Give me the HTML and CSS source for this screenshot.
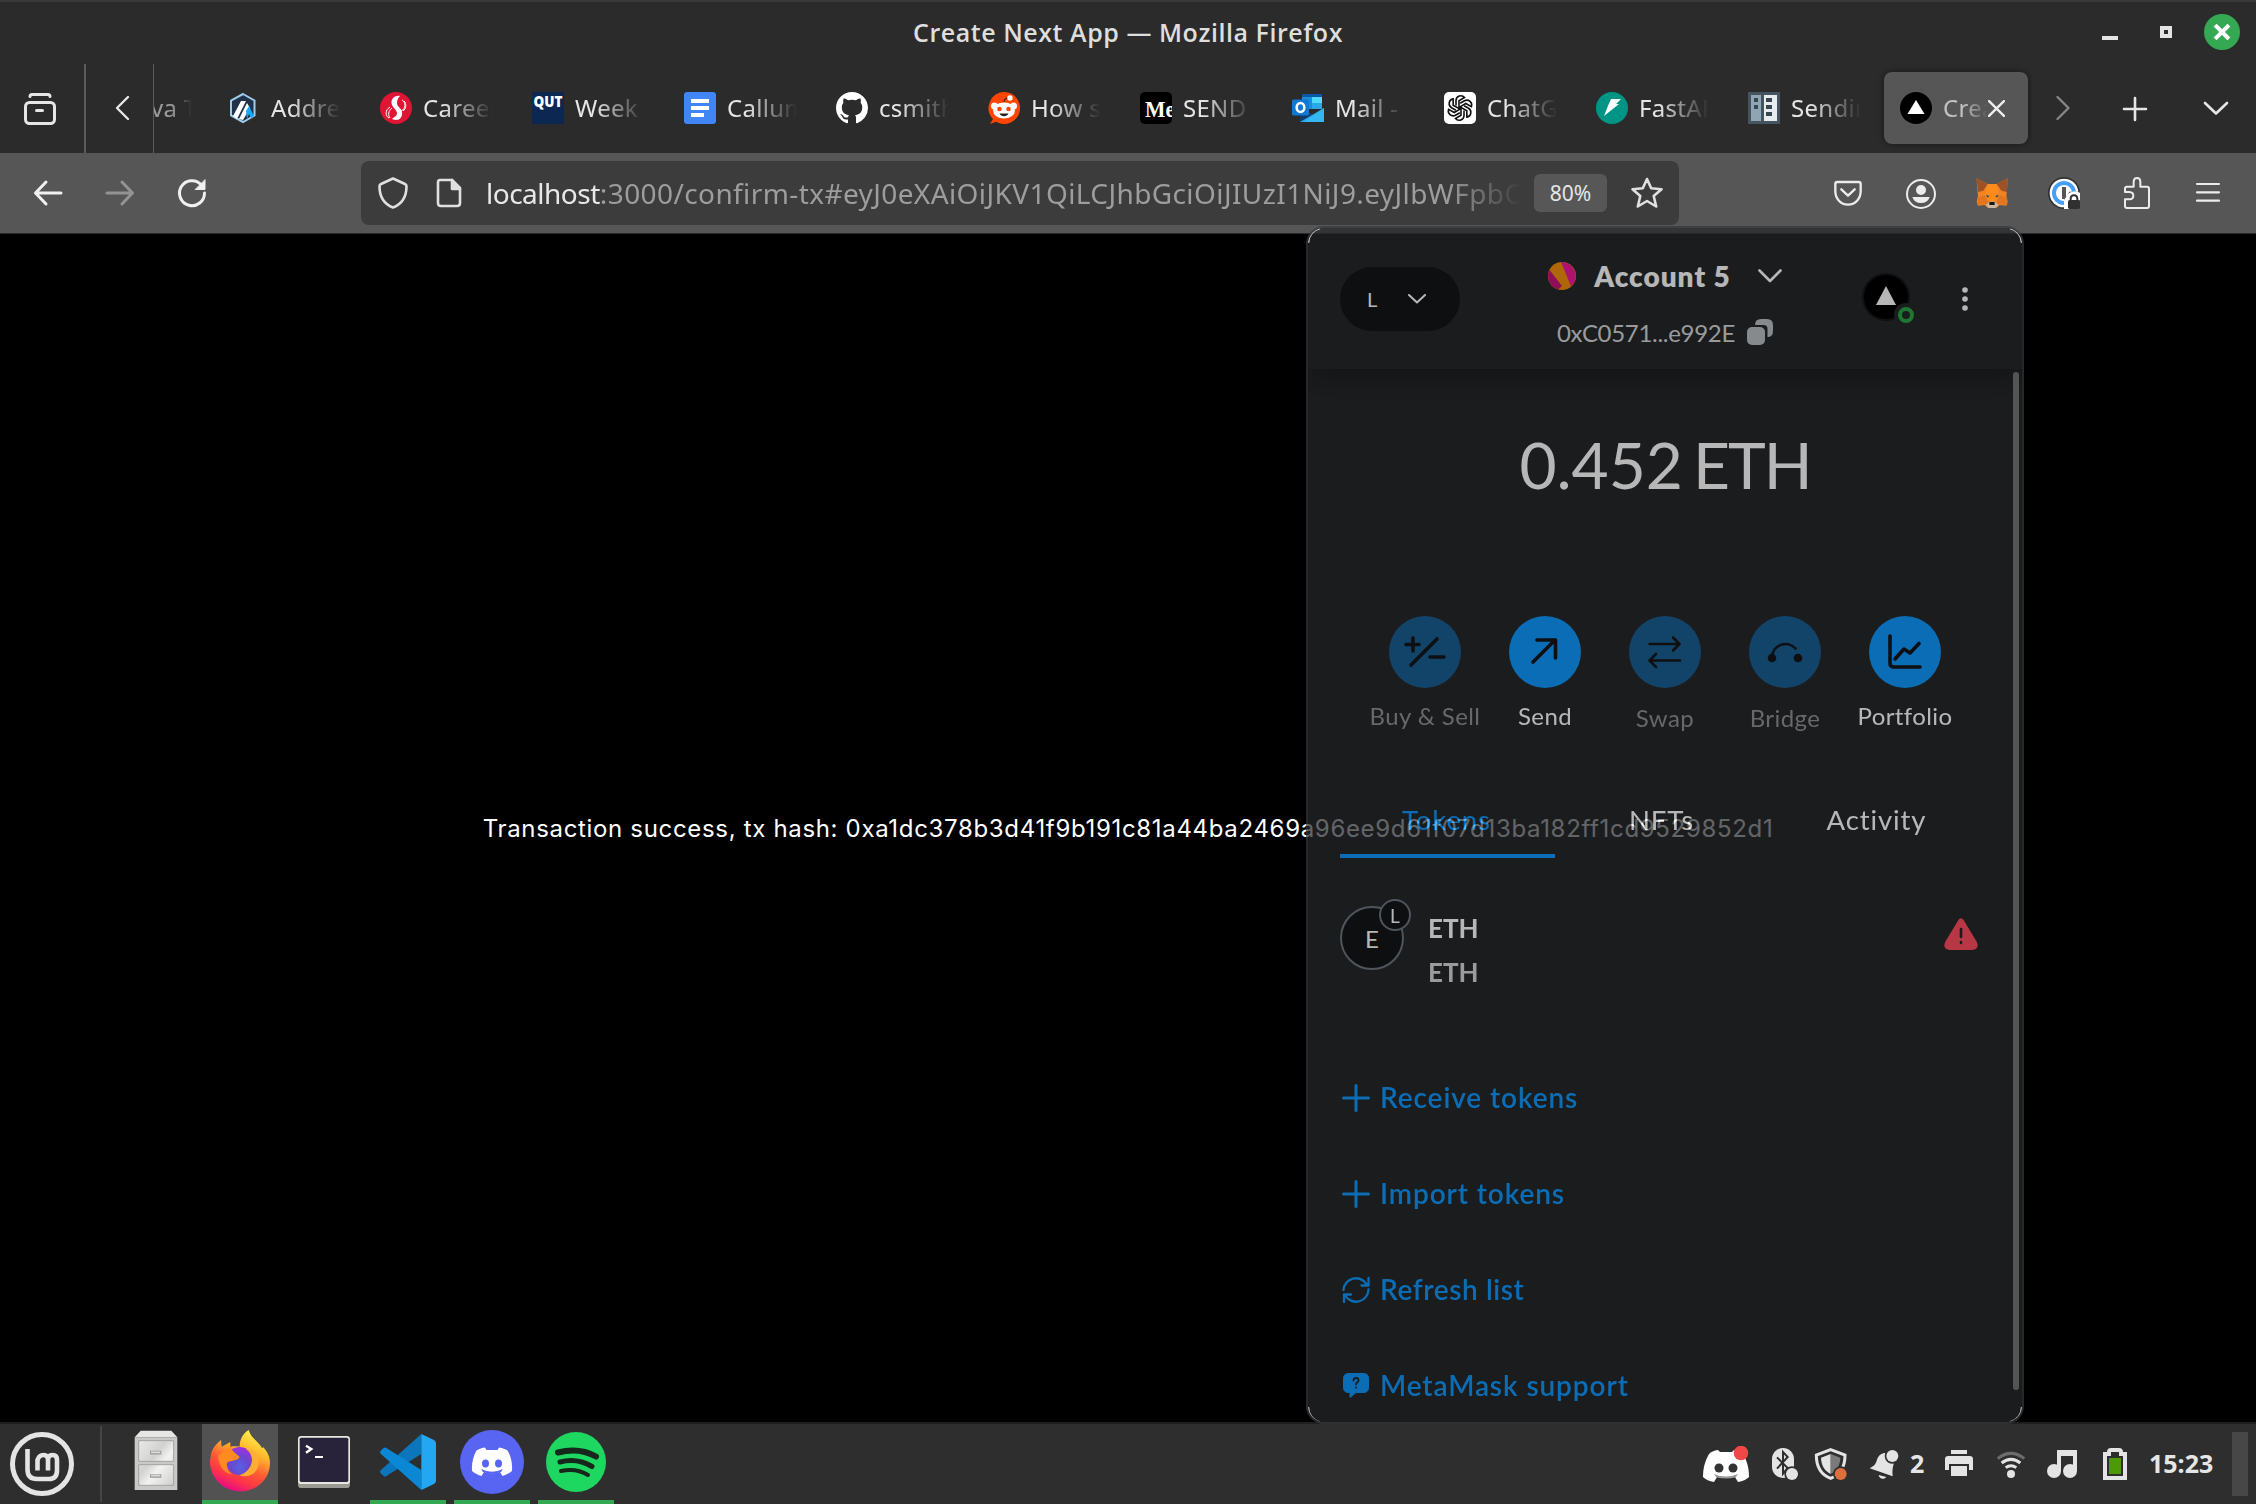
FILE: index.html
```html
<!DOCTYPE html>
<html lang="en">
<head>
<meta charset="utf-8">
<title>Create Next App</title>
<link rel="stylesheet" href="styles.css">
</head>
<body>
<header class="titlebar">
  <div class="window-title">Create Next App — Mozilla Firefox</div>
  <div class="window-controls">
    <svg width="16" height="36" viewBox="0 0 16 36"><path d="M0 22h16v4H0z" fill="#e4e4e4"/></svg>
    <svg width="12" height="36" viewBox="0 0 12 36"><path d="M2 14h8v8H2z" fill="none" stroke="#e4e4e4" stroke-width="4"/></svg>
    <svg width="36" height="36" viewBox="0 0 36 36"><circle cx="18" cy="18" r="18" fill="#35a854"/><path d="M12.500 12.500l11 11M23.500 12.500l-11 11" stroke="#fff" stroke-width="4" stroke-linecap="square"/></svg>
  </div>
</header>

<nav class="tabstrip">
  <div class="view-button"><svg width="32" height="32" viewBox="0 0 32 32" fill="none" stroke="#e6e6e6" stroke-width="3" stroke-linecap="round"><rect x="1.5" y="9.500" width="29" height="21" rx="4"/><path d="M6 3.500C6 2 7 1.500 8 1.500h16c1 0 2 .5 2 2M12.500 17.500h6"/></svg></div>
  <div class="scroll-left"><svg width="16" height="26" viewBox="0 0 16 26" fill="none" stroke="#e6e6e6" stroke-width="2.400" stroke-linecap="round" stroke-linejoin="round"><path d="M14 2L3 13l11 11"/></svg></div>
  <div class="tabs">
    <div class="tab tab-cut"><span class="tab-label">va T</span></div>
    <div class="tab"><svg class="fav" viewBox="0 0 32 32"><path d="M15 2l11.500 6.500v15L15 30 3 23.500v-15z" fill="#213147" stroke="#9dcced" stroke-width="2"/><path d="M5 24l8-15h5L9 27z" fill="#fff"/><path d="M11 27l8-16 3 5-7 12z" fill="#fff"/><path d="M18 19l3-5 5 10-3 2-2-4-2 5z" fill="#12aaff"/></svg><span class="tab-label">Address</span></div>
    <div class="tab"><svg class="fav" viewBox="0 0 32 32"><circle cx="16" cy="16" r="16" fill="#e01533"/><path d="M20 4c-6-1-10 4-8 9 1 3 5 5 5 8s-3 4-5 6c6 3 11-1 10-7-.500-4-5-5-5-9 0-3 1-5 3-7z" fill="#fff"/><path d="M22 8c4 2 4 9-1 11M24 9c3 3 2 8-1 10M10 15c-5 3-5 9-1 11M12 16c-4 3-4 7-2 10" stroke="#fff" fill="none"/></svg><span class="tab-label">Careers</span></div>
    <div class="tab"><svg class="fav" viewBox="0 0 32 32"><path d="M0 0h32v32H0z" fill="#0c2852"/><text x="1.500" y="15" class="fav-qut" textLength="29" lengthAdjust="spacingAndGlyphs">QUT</text></svg><span class="tab-label">Week 1</span></div>
    <div class="tab"><svg class="fav" viewBox="0 0 32 32"><rect width="32" height="32" rx="3" fill="#4285f4"/><path d="M7 9h18M7 16h18M7 23h13" stroke="#fff" stroke-width="4"/></svg><span class="tab-label">Callum</span></div>
    <div class="tab"><svg class="fav" viewBox="0 0 16 16"><path fill="#fff" d="M8 0C3.580 0 0 3.580 0 8c0 3.540 2.290 6.530 5.470 7.590.4.070.55-.17.55-.38 0-.19-.010-.82-.010-1.490-2.010.37-2.530-.49-2.690-.94-.090-.23-.48-.94-.82-1.130-.28-.15-.68-.52-.010-.53.63-.010 1.080.58 1.230.82.72 1.210 1.870.87 2.330.66.070-.52.28-.87.510-1.070-1.780-.2-3.640-.89-3.640-3.950 0-.87.310-1.590.82-2.150-.080-.2-.36-1.020.080-2.120 0 0 .67-.21 2.200.82.64-.18 1.320-.27 2-.27s1.360.090 2 .27c1.530-1.040 2.200-.82 2.200-.82.44 1.100.16 1.920.080 2.120.510.56.82 1.270.82 2.150 0 3.070-1.870 3.750-3.650 3.950.29.25.54.73.54 1.480 0 1.070-.010 1.930-.010 2.200 0 .21.15.46.55.38A8.010 8.010 0 0016 8c0-4.420-3.580-8-8-8z"/></svg><span class="tab-label">csmith</span></div>
    <div class="tab"><svg class="fav" viewBox="0 0 32 32"><path d="M16 0a16 16 0 11-8 29.800L2 32l3-5A16 16 0 0116 0z" fill="#ff4500"/><circle cx="6.500" cy="14" r="3.500" fill="#fff"/><circle cx="25.500" cy="14" r="3.500" fill="#fff"/><ellipse cx="16" cy="18.500" rx="11" ry="8" fill="#fff"/><path d="M16 10c0-3 2-4 5-4" stroke="#222" stroke-width="1.200" fill="none"/><circle cx="22" cy="6" r="2.700" fill="#fff"/><circle cx="11.500" cy="17" r="2.300" fill="#ff4500"/><circle cx="20.500" cy="17" r="2.300" fill="#ff4500"/><path d="M11.500 21.500h9c-1.500 3.500-7.500 3.500-9 0z" fill="#222"/></svg><span class="tab-label">How s</span></div>
    <div class="tab"><svg class="fav" viewBox="0 0 32 32"><rect width="32" height="32" rx="5"/><text x="5" y="25" class="fav-serif" textLength="30" lengthAdjust="spacingAndGlyphs">Me</text></svg><span class="tab-label">SEND</span></div>
    <div class="tab"><svg class="fav" viewBox="0 0 32 32"><path d="M10 2h20v15H10z" fill="#1490df"/><path d="M10 2h20v3H10z" fill="#0a58a8"/><path d="M20 5h10v6H20z" fill="#50d9ff"/><path d="M20 11h10v6H20z" fill="#28a8ea"/><path d="M8 16l12 7 12-7v14H8z" fill="#28a8ea"/><path d="M8 16l12 7-12 7z" fill="#123b6d"/><path d="M12 30l20-14v14z" fill="#35b8f1"/><rect y="7.500" width="17" height="16" rx="1.500" fill="#0f78d4"/><ellipse cx="8.500" cy="15.500" rx="3.800" ry="4.500" fill="none" stroke="#fff" stroke-width="2.600"/></svg><span class="tab-label">Mail -</span></div>
    <div class="tab"><svg class="fav" viewBox="0 0 32 32"><rect width="32" height="32" rx="5" fill="#fff"/><g fill="none" stroke="#111" stroke-width="1.600" transform="translate(16 16)"><path d="M-4-2.500v-5a4.800 4.800 0 018.500-3L-1-7.300V1"/><path d="M-4-2.500v-5a4.800 4.800 0 018.500-3L-1-7.300V1" transform="rotate(60)"/><path d="M-4-2.500v-5a4.800 4.800 0 018.500-3L-1-7.300V1" transform="rotate(120)"/><path d="M-4-2.500v-5a4.800 4.800 0 018.500-3L-1-7.300V1" transform="rotate(180)"/><path d="M-4-2.500v-5a4.800 4.800 0 018.500-3L-1-7.300V1" transform="rotate(240)"/><path d="M-4-2.500v-5a4.800 4.800 0 018.500-3L-1-7.300V1" transform="rotate(300)"/></g></svg><span class="tab-label">ChatGPT</span></div>
    <div class="tab"><svg class="fav" viewBox="0 0 32 32"><circle cx="16" cy="16" r="16" fill="#009485"/><path d="M15 7h10l-5 5h3L8 24l3.500-9z" fill="#fff"/></svg><span class="tab-label">FastAPI</span></div>
    <div class="tab"><svg class="fav" viewBox="0 0 32 32"><path d="M0 0h32v32H0z" fill="#455560"/><path d="M3 3h10v26H3z" fill="#90a4b4"/><path d="M16 3h13v26H16z" fill="#e6ecef"/><path d="M6 6h4v4H6zM6 13h4v4H6zM18 6h6v4h-6zM18 13h6v4h-6zM18 20h6v4h-6z" fill="#37474f"/></svg><span class="tab-label">Sending</span></div>
    <div class="tab tab-active"><svg class="fav" viewBox="0 0 32 32"><circle cx="16" cy="16" r="16"/><path d="M16 8l8.500 14h-17z" fill="#fff"/></svg><span class="tab-label">Create</span><svg class="tab-close" viewBox="0 0 16 16"><path d="M1 1l14 14M15 1L1 15" stroke="#eee" stroke-width="2.200" stroke-linecap="round"/></svg></div>
  </div>
  <div class="strip-actions">
    <svg width="32" height="32" viewBox="0 0 32 32" fill="none" stroke="#858585" stroke-width="2.400" stroke-linecap="round" stroke-linejoin="round"><path d="M10.500 5l11 11-11 11"/></svg>
    <svg width="32" height="32" viewBox="0 0 32 32" fill="none" stroke="#e6e6e6" stroke-width="2.600" stroke-linecap="round"><path d="M16 6v22M5 17h22"/></svg>
    <svg class="all-tabs" width="32" height="32" viewBox="0 0 32 32" fill="none" stroke="#e6e6e6" stroke-width="2.600" stroke-linecap="round" stroke-linejoin="round"><path d="M5 11l11 10.500L27 11"/></svg>
  </div>
</nav>

<div class="toolbar">
  <div class="nav-buttons">
    <svg width="32" height="32" viewBox="0 0 32 32" fill="none" stroke="#f0f0f0" stroke-width="3" stroke-linecap="round" stroke-linejoin="round"><path d="M14 5L3.500 16 14 27M4 16h25"/></svg>
    <svg width="32" height="32" viewBox="0 0 32 32" fill="none" stroke="#939393" stroke-width="3" stroke-linecap="round" stroke-linejoin="round"><path d="M18 5l10.500 11L18 27M28 16H3"/></svg>
    <svg width="32" height="32" viewBox="0 0 32 32" fill="none" stroke="#f0f0f0" stroke-width="3" stroke-linecap="round"><path d="M28.500 16A12.500 12.500 0 1125 7.500"/><path d="M29 3v9.500h-9.500z" fill="#f0f0f0" stroke-width="1" stroke-linejoin="round"/></svg>
  </div>
  <div class="urlbar">
    <svg width="32" height="32" viewBox="0 0 32 32" fill="none" stroke="#e0e0e0" stroke-width="2.600" stroke-linejoin="round"><path d="M16 1.500l12 5.500q1.500.7 1.500 2.500C29.500 19 25 27 16 30.500 7 27 2.500 19 2.500 9.500 2.500 7.700 3 7.300 4 7z"/></svg>
    <svg class="doc" width="26" height="30" viewBox="0 0 26 30" fill="none" stroke="#e0e0e0" stroke-width="2.600" stroke-linejoin="round"><path d="M4 2h12l8 8v15q0 3-3 3H5q-3 0-3-3V4.500Q2 2 4 2z"/><path d="M16 2v9h8z" fill="#e0e0e0"/></svg>
    <div class="url"><span class="host">localhost</span>:3000/confirm-tx#eyJ0eXAiOiJKV1QiLCJhbGciOiJIUzI1NiJ9.eyJlbWFpbC</div>
    <span class="zoom-level">80%</span>
    <svg width="32" height="32" viewBox="0 0 32 32" fill="none" stroke="#e0e0e0" stroke-width="2.600" stroke-linejoin="round"><path d="M16 2l4.200 9.300 10.300 1-7.800 6.700 2.500 10.500L16 24l-9.200 5.500L9.300 19 1.500 12.300l10.300-1z"/></svg>
  </div>
  <div class="extensions">
    <svg width="32" height="32" viewBox="36 51 96 96" fill="none" stroke="#ececec" stroke-width="7" stroke-linecap="round" stroke-linejoin="round"><path d="M52 66h64q6 0 6 6v22c0 22-16 40-38 40S46 116 46 94V72q0-6 6-6zM64 88l20 19 20-19"/></svg>
    <svg width="32" height="32" viewBox="252 51 96 96"><circle cx="303" cy="102" r="42" fill="none" stroke="#ececec" stroke-width="6"/><circle cx="303" cy="90" r="15" fill="#ececec"/><path d="M277 111h52q-6 18-26 18t-26-18z" fill="#ececec"/></svg>
    <svg width="32" height="32" viewBox="468 51 96 96"><path d="M470 55l33 17h27l33-17-2 34-2 18 4 18-4 12-20-2-10 9h-25l-10-9-20 2-4-12 4-18-2-18z" fill="#f28324"/><path d="M470 55l33 17-13 20-16 4zM563 55l-33 17 14 20 17 4z" fill="#9b5227"/><path d="M503 72l-9 38 22 20 22-20-8-38z" fill="#fa8b1c"/><path d="M474 112l22-6 10 26-34 2zM560 112l-22-6-10 26 34 2z" fill="#e2751d"/><path d="M498 104l10 4-5 5zM536 104l-10 4 5 5z" fill="#234466"/><path d="M498 134l10-9h17l10 9-9 10h-19z" fill="#c9b8a8"/><path d="M508 126h16v9h-16z" fill="#181818"/></svg>
    <svg width="32" height="32" viewBox="684 51 96 96"><circle cx="732" cy="99" r="48" fill="#303030"/><circle cx="732" cy="99" r="43" fill="#fff"/><circle cx="732" cy="99" r="30" fill="none" stroke="#469ffb" stroke-width="12"/><path d="M726 81h12v36h-12z" fill="#555"/><path d="M732 147v-27l16-25h32v52z" fill="#565656"/><path d="M732 147v-26l12-20q18-14 36-2v20l-30 28z" fill="#fff"/><path d="M752 124v-7q0-11 10-11t10 11v7" fill="none" stroke="#303030" stroke-width="6"/><rect x="744" y="120" width="36" height="27" rx="5" fill="#303030"/></svg>
    <svg width="32" height="32" viewBox="900 51 96 96" fill="none" stroke="#ececec" stroke-width="6" stroke-linejoin="round"><path d="M921 80h20V64q1-10 10-10t10 10v16h20q6 0 6 6v52q0 6-6 6h-60q-6 0-6-6v-20h13q12-1 12-11t-12-11h-13V86q0-6 6-6z"/></svg>
    <svg width="32" height="32" viewBox="1116 51 96 96" stroke="#ececec" stroke-width="6.500" stroke-linecap="round"><path d="M1131 72h66M1131 97h66M1131 122h66"/></svg>
  </div>
</div>

<main class="page"><p class="message">Transaction success, tx hash: 0xa1dc378b3d41f9b191c81a44ba2469a96ee9d61f07d13ba182ff1cd9529852d1</p></main>

<section class="popup">
  <div class="popup-header">
    <div class="network"><span>L</span><svg width="18" height="10" viewBox="0 0 18 10" fill="none" stroke="#fff" stroke-width="2" stroke-linecap="round" stroke-linejoin="round"><path d="M1 1l8 7.500L17 1"/></svg></div>
    <div class="account">
      <div class="account-name"><svg width="28" height="28" viewBox="0 0 28 28"><circle cx="14" cy="14" r="14" fill="#f5900b"/><path d="M13 0a14 14 0 0110 24.500z" fill="#f01b9a"/><path d="M1.500 8L14 24l-4 3.500A14 14 0 011.500 8z" fill="#c8147d"/></svg><span class="name">Account 5</span><svg width="24" height="14" viewBox="0 0 24 14" fill="none" stroke="#fff" stroke-width="2.600" stroke-linecap="round" stroke-linejoin="round"><path d="M1.500 1.500L12 12 22.500 1.500"/></svg></div>
      <div class="account-address"><span class="address">0xC0571...e992E</span><svg width="26" height="26" viewBox="0 0 26 26" fill="#bbc0c5"><rect y="8" width="18" height="18" rx="5"/><path d="M8 6q0-6 6-6h6q6 0 6 6v6q0 6-5.500 6v-8q0-4-4-4z"/></svg></div>
    </div>
    <div class="header-actions">
      <svg width="56" height="56" viewBox="0 0 56 56"><circle cx="26" cy="26" r="23" stroke="#15171a" stroke-width="2"/><path d="M26 15l10 19H16z" fill="#fff"/><circle cx="46" cy="44" r="12" fill="#26282a"/><circle cx="46" cy="44" r="6" fill="none" stroke="#28a745" stroke-width="4"/></svg>
      <svg width="50" height="50" viewBox="0 0 50 50" fill="#fff"><circle cx="25" cy="16" r="2.800"/><circle cx="25" cy="25" r="2.800"/><circle cx="25" cy="34" r="2.800"/></svg>
    </div>
  </div>

  <div class="popup-body">
    <div class="balance"><span>0.452</span><span class="unit">ETH</span></div>
    <div class="actions">
      <div class="action action-off"><svg viewBox="0 0 72 72"><path d="M24 22v13M17 28.500h13M22 49l26-26M41 41h14" /></svg><span>Buy &amp; Sell</span></div>
      <div class="action"><svg viewBox="0 0 72 72"><path d="M24 46l22-22M28 24h18.500v18"/></svg><span>Send</span></div>
      <div class="action action-off action-low"><svg class="thin" viewBox="0 0 72 72"><path d="M20.500 28h30M44 21.500l6.500 6.500-6.500 6.500M51 44.500H20.500M27 38l-6.500 6.500L27 51"/></svg><span>Swap</span></div>
      <div class="action action-off action-low"><svg class="thin" viewBox="0 0 72 72"><path d="M23 41a13.500 13.500 0 0123.500-8.500"/><circle cx="23" cy="42" r="3" class="solid"/><circle cx="49" cy="42" r="3" class="solid"/></svg><span>Bridge</span></div>
      <div class="action"><svg viewBox="0 0 72 72"><path d="M21 20v27q0 4 4 4h26M26 43l9-10 6 4 9-9.500"/></svg><span>Portfolio</span></div>
    </div>
    <div class="sections"><div class="section section-on">Tokens</div><div class="section">NFTs</div><div class="section">Activity</div></div>
    <div class="token">
      <div class="token-icon">E<span class="token-badge">L</span></div>
      <div class="token-names"><span>ETH</span><span class="muted">ETH</span></div>
      <svg class="warning" width="34" height="32" viewBox="0 0 34 32"><path d="M17 3.500L30 25q2 4-2 4H6q-4 0-2-4z" fill="#ff4d5f" stroke="#ff4d5f" stroke-width="6" stroke-linejoin="round"/><path d="M17 11v8M17 24v1" stroke="#24272a" stroke-width="2.600" stroke-linecap="round"/></svg>
    </div>
    <div class="links">
      <div class="link"><svg viewBox="0 0 28 28"><path d="M14 1.500v25M1.500 14h25" stroke-width="3"/></svg><span>Receive tokens</span></div>
      <div class="link"><svg viewBox="0 0 28 28"><path d="M14 1.500v25M1.500 14h25" stroke-width="3"/></svg><span>Import tokens</span></div>
      <div class="link"><svg viewBox="0 0 28 28"><path d="M1.500 14A12.500 12.500 0 0124.500 8M26.500 13.500A12.500 12.500 0 013.500 20M26.500 2v7.500h-7M2 26v-7.500h7" stroke-width="2.300"/></svg><span class="tight">Refresh list</span></div>
      <div class="link"><svg viewBox="0 0 28 28"><path d="M6.500 1.500h15q5 0 5 5v9q0 5-5 5H14l-6 5v-5H6.500q-5 0-5-5v-9q0-5 5-5z" fill="currentColor" stroke-width="1"/><path d="M11.500 8.500q.3-2.500 2.600-2.500t2.500 2.300c0 2-2.600 2-2.600 4.200M14 15.500v.3" stroke="#24272a" stroke-width="1.800"/></svg><span>MetaMask support</span></div>
    </div>
  </div>
  <div class="scrollbar"></div>
  <svg class="corners" viewBox="0 0 718 1198" fill="none" stroke="#fff" stroke-width="1.500"><path d="M2.500 17A15 15 0 0114 2.500M704 2.500A15 15 0 01715.500 17M2.500 1181A15 15 0 0014 1196M704 1196a15 15 0 0011.500-15"/></svg>
</section>

<footer class="taskbar">
  <svg class="start" viewBox="0 0 64 64" fill="none" stroke="#e4e4e4"><circle cx="32" cy="32" r="29.500" stroke-width="5"/><path d="M17.500 17v20.500q0 9.500 9.500 9.500h12q8 0 8-8.500V28q0-5-4.500-5T38 28v10.500M38 38.500V28q0-5-4.500-5T27.500 28v10.500" stroke-width="4.600"/></svg>
  <div class="separator"></div>
  <div class="launchers">
    <div class="launcher"><svg viewBox="354 6 228 228"><defs><linearGradient id="steel" x2="1" y2="1"><stop offset="0" stop-color="#e9e9e7"/><stop offset=".4" stop-color="#d2d2d0"/><stop offset=".6" stop-color="#f2f2f1"/><stop offset="1" stop-color="#cfcfcd"/></linearGradient></defs><path d="M404 46l18-20h92l18 20z" fill="#e6e6e4"/><path d="M404 46h128v158H404z" fill="#c9c9c7"/><path d="M416 56h105v62H416zM416 128h105v62H416z" fill="url(#steel)" stroke="#a3a3a1" stroke-width="3"/><path d="M450 92h34M450 162h34" stroke="#999" stroke-width="11"/><path d="M453 91h28M453 161h28" stroke="#dcdcdc" stroke-width="5"/></svg></div>
    <div class="launcher launcher-open launcher-focus"><svg viewBox="606 6 228 228"><defs><linearGradient id="fire" x1=".8" y1="0" x2=".35" y2="1"><stop offset=".05" stop-color="#fff24a"/><stop offset=".35" stop-color="#ffb42c"/><stop offset=".6" stop-color="#ff5b33"/><stop offset=".8" stop-color="#ff3647"/><stop offset="1" stop-color="#e3098a"/></linearGradient><radialGradient id="globe" cx=".5" cy=".7" r=".7"><stop offset="0" stop-color="#5a5fe6"/><stop offset=".5" stop-color="#6b46cf"/><stop offset="1" stop-color="#a031e0"/></radialGradient></defs><path d="M632 104c2-20 12-34 31-50l2 20 26-14v14c8-1 20-2 28 0 0-20 8-38 27-50 8 26 28 33 40 54l4-2c12 14 20 28 20 46 0 50-40 86-90 86s-90-40-90-90z" fill="url(#fire)"/><circle cx="719" cy="117" r="42" fill="url(#globe)"/><path d="M655 100l36-26c5 12 14 20 28 30-3 14-30 10-38 18-2 12 4 28 16 36-26-4-42-26-42-58z" fill="#ff8a1f"/><path d="M736 80c14 8 21 22 20 38-4 22-18 36-38 42 40 12 68-20 56-58-6-14-20-22-38-22z" fill="#ffae32"/></svg></div>
    <div class="launcher"><svg viewBox="858 6 228 228"><rect x="894" y="60" width="156" height="138" rx="10" fill="#9a9a92"/><rect x="894" y="42" width="156" height="144" rx="10" fill="#e8e8e2"/><rect x="899" y="47" width="146" height="133" rx="5" fill="#28233a"/><path d="M918 71l16 10-16 11" fill="none" stroke="#fff" stroke-width="7"/><path d="M945 105h24" stroke="#fff" stroke-width="6"/></svg></div>
    <div class="launcher launcher-open"><svg viewBox="1110 6 228 228"><path d="M1264 36v60l-105 66q-4 3-8 0l-9-8q-4-4 0-9z" fill="#0b76bb"/><path d="M1264 204v-60l-105-66q-4-3-8 0l-9 8q-4 4 0 9z" fill="#0a88d6"/><path d="M1264 36l38 18q6 4 6 10v112q0 6-6 10l-38 18z" fill="#24a7f2"/></svg></div>
    <div class="launcher launcher-open"><svg viewBox="0 0 76 76"><circle cx="38" cy="38" r="32" fill="#5865f2"/><path d="M31 23.500c-4 .5-7 2-8.500 3-3.500 6-5 13-4.500 20.500 3 2.500 6 4 9.500 5l2.500-4c5 1.500 11 1.500 16 0l2.500 4c3.500-1 6.500-2.500 9.500-5 .5-8-1-15-4.500-20.500-2-1.300-5-2.500-8.500-3l-1.500 2.500h-11z" fill="#fff"/><path d="M27 45q11 5.500 22 0l-2 3q-9 3-18 0z" fill="#5865f2"/><ellipse cx="31.500" cy="39.500" rx="3.500" ry="4" fill="#5865f2"/><ellipse cx="44.500" cy="39.500" rx="3.500" ry="4" fill="#5865f2"/></svg></div>
    <div class="launcher launcher-open"><svg viewBox="0 0 76 76"><circle cx="38" cy="38" r="30" fill="#1ed760"/><path d="M20 28.500q21-5.500 38 4" stroke-width="6"/><path d="M22 38q17-4.500 32 4.500" stroke-width="5"/><path d="M23 47q15-3.500 27 4" stroke-width="4"/></svg></div>
  </div>
  <div class="tray">
    <svg width="46" height="36" viewBox="0 0 46 36"><path d="M15 4c-4 .5-7 2-9 4C2 15 0 22 0 31q4 4 11 5l3-5q9 2 18 0l3 5q7-1 11-5C46 22 44 15 40 8c-2-2-5-3.500-9-4l-2 2H17z" fill="#fff"/><path d="M11 28q12 5 24 0l-2 3q-10 3-20 0z" fill="#9a9a9a"/><circle cx="16" cy="22" r="4.500" fill="#333"/><circle cx="30" cy="22" r="4.500" fill="#333"/><circle cx="38" cy="7" r="7.300" fill="#f04747"/></svg>
    <svg class="t-bt" width="26" height="32" viewBox="228 54 78 96"><rect x="228" y="54" width="66" height="90" rx="33" fill="#e4e4e4"/><path d="M243 82l32 32-14 17V66l14 15-32 35" fill="none" stroke="#2e2e2e" stroke-width="6"/><circle cx="288" cy="132" r="23" fill="#2e2e2e"/><circle cx="288" cy="132" r="18" fill="#e4e4e4"/></svg>
    <svg class="t-sh" width="33" height="32" viewBox="352 54 99 96"><path d="M402 59l43 16c0 38-16 60-43 70-27-10-43-32-43-70z" fill="none" stroke="#e4e4e4" stroke-width="9"/><path d="M402 72v60c-18-10-28-24-29-49z" fill="#e4e4e4"/><path d="M402 72v60c18-10 28-24 29-49z" fill="#7a7a7a"/><circle cx="432" cy="132" r="23" fill="#2e2e2e"/><circle cx="432" cy="132" r="18" fill="#dd6e3d"/></svg>
    <svg class="t-bell" width="30" height="32" viewBox="518 54 90 96"><path d="M520 115c16-9 18-14 22-26 4-14 16-22 30-20 18 5 24 16 20 32-3 12-5 22-3 38z" fill="#e4e4e4"/><path d="M547 135q3 13 15 11 6-1 8-5z" fill="#e4e4e4"/><circle cx="588" cy="78" r="23" fill="#2e2e2e"/><circle cx="588" cy="78" r="18" fill="#e4e4e4"/></svg>
    <span class="t-count">2</span>
    <svg class="t-print" width="28" height="32" viewBox="747 54 84 96" fill="#e4e4e4"><path d="M765 60h48v12h-48zM757 78h64q10 0 10 10v32h-12v-18h-60v18h-12V88q0-10 10-10zM765 108h48v30h-48z"/></svg>
    <svg class="t-wifi" width="28" height="32" viewBox="903 54 84 96" fill="none" stroke="#e4e4e4" stroke-width="9"><path d="M905 86q40-32 80 0" stroke="#6c6c6c"/><path d="M917 99q28-22 56 0M929 113q16-12 32 0"/><circle cx="945" cy="132" r="12" fill="#e4e4e4" stroke="none"/></svg>
    <svg class="t-music" width="30" height="32" viewBox="1053 54 90 96"><path d="M1083 60h60v64h-12V78h-36v46h-12z" fill="#e4e4e4"/><ellipse cx="1074" cy="123" rx="21" ry="21" fill="#e4e4e4"/><ellipse cx="1122" cy="123" rx="21" ry="21" fill="#e4e4e4"/></svg>
    <svg class="t-batt" width="24" height="32" viewBox="1221 54 72 96"><path d="M1221 66h12q0-12 12-12h24q12 0 12 12h12v84h-72z" fill="#e4e4e4"/><path d="M1233 78h12V66h24v12h12v60h-48z" fill="#2e2e2e"/><path d="M1239 84h36v48h-36z" fill="#4e9a06"/></svg>
    <span class="clock">15:23</span>
    <div class="show-desktop"></div>
  </div>
</footer>
</body>
</html>
```
FILE: styles.css
```css
* { box-sizing: border-box; }
body {
  margin: 0;
  width: 2256px;
  height: 1504px;
  overflow: hidden;
  display: flex;
  flex-direction: column;
  position: relative;
  background: #000;
  color: #e6e6e6;
  font-family: "Noto Sans", sans-serif;
}
svg { display: block; flex: none; }

/* Title bar */
.titlebar {
  flex: 0 0 64px;
  display: grid;
  grid-template-columns: 1fr auto 1fr;
  background: #2b2b2b;
  border-top: 2px solid #393939;
}
.window-title {
  grid-column: 2;
  font-family: "Open Sans", sans-serif;
  font-size: 25px;
  font-weight: 600;
  line-height: 60px;
  letter-spacing: .55px;
  color: #dedede;
  white-space: nowrap;
}
.window-controls {
  grid-column: 3;
  display: flex;
  justify-content: flex-end;
  padding: 12px 16px 0 0;
}
.window-controls svg:nth-child(2) { margin: 0 32px 0 42px; }

/* Tab strip */
.tabstrip {
  flex: 0 0 89px;
  display: flex;
  background: #2b2b2b;
}
.view-button {
  width: 86px;
  border-right: 2px solid #5b5b5b;
  padding: 29px 0 0 24px;
}
.scroll-left {
  width: 68px;
  border-right: 1px solid #5b5b5b;
  padding: 31px 0 0 28px;
}
.tabs {
  width: 1878px;
  display: flex;
  overflow: hidden;
}
.tab {
  flex: 0 0 144px;
  min-width: 0;
  height: 72px;
  margin: 8px 4px 0;
  padding: 0 15px 0 16px;
  display: flex;
  align-items: center;
  border-radius: 8px;
}
.tab-cut { flex-basis: 46px; padding: 0 12px 0 0; }
.tab-cut .tab-label { margin-left: -7px; opacity: .6; }
.fav { width: 32px; height: 32px; }
.fav-qut { font: 800 16px "Open Sans", sans-serif; fill: #fff; }
.fav-serif { font: 700 24px "Liberation Serif", serif; fill: #fff; }
.tab-label {
  flex: 1;
  min-width: 0;
  margin-left: 11px;
  overflow: hidden;
  white-space: nowrap;
  font-size: 24px;
  line-height: 34px;
  letter-spacing: .3px;
  -webkit-mask-image: linear-gradient(to right, #000 20px, transparent 100%);
  mask-image: linear-gradient(to right, #000 20px, transparent 100%);
}
.tab-active {
  background: #565656;
  box-shadow: 0 0 6px rgba(0, 0, 0, .5);
  padding-right: 23px;
}
.tab-active .tab-label { opacity: .75; }
.tab-close { width: 17px; height: 17px; }
.strip-actions {
  display: flex;
  gap: 40px;
  padding: 28px 0 0 15px;
}
.all-tabs { margin-left: 9px; }

/* Toolbar */
.toolbar {
  flex: 0 0 81px;
  display: flex;
  align-items: center;
  justify-content: space-between;
  padding: 0 32px;
  background: #565656;
  border-bottom: 1px solid #2b2b2b;
}
.nav-buttons { display: flex; gap: 40px; width: 329px; }
.urlbar {
  flex: 0 0 1318px;
  height: 64px;
  display: flex;
  align-items: center;
  padding: 0 16px;
  background: #3c3c3c;
  border-radius: 8px;
}
.doc { margin-left: 27px; }
.url {
  flex: 0 0 1036px;
  margin-left: 24px;
  overflow: hidden;
  white-space: nowrap;
  font-size: 28px;
  line-height: 40px;
  letter-spacing: .4px;
  color: #9d9d9d;
  -webkit-mask-image: linear-gradient(to right, #000 960px, transparent 100%);
  mask-image: linear-gradient(to right, #000 960px, transparent 100%);
}
.host { color: #e8e8e8; letter-spacing: -.5px; }
.zoom-level {
  width: 73px;
  height: 38px;
  margin: 0 24px 0 12px;
  border-radius: 6px;
  background: #575757;
  font-size: 21px;
  line-height: 38px;
  text-align: center;
}
.extensions { display: flex; gap: 40px; margin-left: auto; }

/* Page */
.page {
  flex: 1;
  display: flex;
  align-items: center;
  justify-content: center;
}
.message {
  margin: 2px 0 0;
  font-family: Inter, sans-serif;
  font-size: 24px;
  line-height: 36px;
  letter-spacing: .67px;
  color: #fff;
  white-space: nowrap;
}

/* Wallet popup, mid fade-in over the page */
.popup {
  position: absolute;
  left: 1306px;
  top: 226px;
  width: 718px;
  height: 1198px;
  overflow: hidden;
  display: flex;
  flex-direction: column;
  border: 2px solid #36393c;
  border-radius: 18px;
  background: #26282a;
  color: #fff;
  font-family: Lato, sans-serif;
  opacity: .72;
  z-index: 2;
}
.popup-header {
  flex: 0 0 141px;
  display: grid;
  grid-template-columns: 1fr auto 1fr;
  align-items: center;
  padding: 0 32px;
  box-shadow: 0 4px 32px rgba(0, 0, 0, .4);
}
.network {
  width: 120px;
  height: 64px;
  padding: 0 34px 0 27px;
  display: flex;
  align-items: center;
  justify-content: space-between;
  border-radius: 32px;
  background: #141618;
  font-size: 20px;
}
.account { padding-top: 11px; }
.account-name, .account-address {
  height: 56px;
  display: flex;
  align-items: center;
  justify-content: center;
}
.name {
  margin: 0 27px 0 18px;
  font-size: 28px;
  font-weight: 800;
  letter-spacing: 1px;
}
.address {
  margin-right: 12px;
  font-size: 24px;
  letter-spacing: -.3px;
  color: #d6d9dc;
}
.header-actions {
  display: flex;
  align-items: center;
  justify-content: flex-end;
  gap: 24px;
}
.popup-body {
  flex: 1;
  min-height: 0;
  padding: 0 32px;
}
.balance {
  height: 194px;
  display: flex;
  align-items: center;
  justify-content: center;
  gap: 10px;
  padding-bottom: 4px;
  font-size: 64px;
}
.unit { letter-spacing: -2px; }
.actions {
  margin: 53px auto 0;
  width: 600px;
  height: 116px;
  display: grid;
  grid-template-columns: repeat(5, 120px);
}
.action {
  display: flex;
  flex-direction: column;
  align-items: center;
  gap: 12px;
  font-size: 24px;
  line-height: 32px;
  letter-spacing: .4px;
  white-space: nowrap;
}
.action svg {
  width: 72px;
  height: 72px;
  border-radius: 50%;
  background: #1098fc;
  fill: none;
  stroke: #141618;
  stroke-width: 3.6;
  stroke-linecap: round;
  stroke-linejoin: round;
}
.action .thin { stroke-width: 2.6; }
.solid { fill: #141618; }
.action-off svg { background: #1a5f93; }
.action-off span { color: #8f9193; }
.action-low { gap: 14px; }
.sections {
  margin-top: 56px;
  display: grid;
  grid-template-columns: repeat(3, 215px);
  font-size: 27.5px;
  line-height: 64px;
  letter-spacing: .9px;
  text-align: center;
}
.section { padding: 0 2px 2px 0; border-bottom: 4px solid transparent; }
.section-on { color: #1098fc; border-color: #1098fc; }
.token {
  margin-top: 48px;
  height: 88px;
  display: flex;
}
.token-icon, .token-badge {
  display: flex;
  align-items: center;
  justify-content: center;
  border: 2px solid #6f777f;
  border-radius: 50%;
  background: #141618;
}
.token-icon {
  position: relative;
  width: 64px;
  height: 64px;
  font-size: 24px;
}
.token-badge {
  position: absolute;
  left: 37px;
  top: -9px;
  width: 32px;
  height: 32px;
  font-size: 19px;
}
.token-names {
  margin-left: 24px;
  display: flex;
  flex-direction: column;
  font-size: 26px;
  font-weight: 700;
  line-height: 44px;
}
.muted { color: #d6d9dc; }
.warning { margin: 12px 12px 0 auto; }
.links { margin-top: 56px; }
.link {
  height: 96px;
  display: flex;
  align-items: center;
  padding-left: 2px;
  gap: 10px;
  font-size: 28px;
  font-weight: 600;
  letter-spacing: .9px;
  color: #1098fc;
}
.link span { padding-bottom: 2px; }
.link .tight { letter-spacing: .6px; }
.link svg {
  width: 28px;
  height: 28px;
  fill: none;
  stroke: currentColor;
  stroke-linecap: round;
  stroke-linejoin: round;
}
.scrollbar {
  position: absolute;
  right: 3px;
  top: 144px;
  width: 6px;
  height: 1018px;
  border-radius: 3px;
  background: #767676;
}
.corners {
  position: absolute;
  left: -2px;
  top: -2px;
  width: 718px;
  height: 1198px;
}

/* Taskbar */
.taskbar {
  flex: 0 0 82px;
  display: flex;
  align-items: center;
  background: #2e2e2e;
  border-top: 2px solid #1f1f1f;
}
.start { width: 64px; height: 64px; margin-left: 10px; }
.separator { width: 2px; height: 76px; margin: 0 16px 0 26px; background: #454545; }
.launchers { display: flex; gap: 8px; }
.launcher { position: relative; width: 76px; height: 80px; }
.launcher svg { width: 76px; height: 76px; }
.launcher:last-child path { fill: none; stroke: #16271b; stroke-linecap: round; }
.launcher-focus { background: #525252; }
.launcher-open::after {
  content: "";
  position: absolute;
  left: 0;
  bottom: 0;
  width: 76px;
  height: 4px;
  background: #35a854;
}
.tray {
  margin-left: auto;
  display: flex;
  align-items: center;
  padding: 0 8px 1px 0;
  font-size: 25px;
  font-weight: 700;
}
.t-bt { margin-left: 23px; }
.t-sh { margin-left: 16px; }
.t-bell { margin-left: 22px; }
.t-count { width: 16px; margin-left: 11px; padding-bottom: 2px; }
.t-print { margin-left: 19px; }
.t-wifi { margin-left: 24px; }
.t-music { margin-left: 22px; }
.t-batt { margin-left: 26px; }
.clock { width: 66px; margin-left: 22px; padding-bottom: 2px; white-space: nowrap; }
.show-desktop { width: 16px; height: 64px; margin-left: 17px; background: #474747; }
```
